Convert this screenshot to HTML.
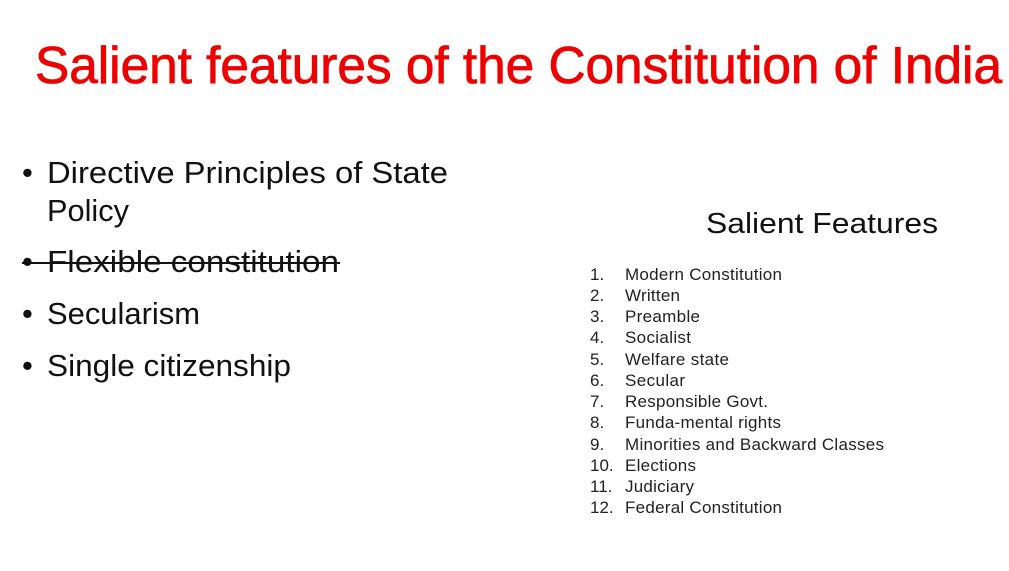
<!DOCTYPE html>
<html><head><meta charset="utf-8"><style>
html,body{margin:0;padding:0;background:#fff;}
svg{display:block}
</style></head><body>
<svg width="1009" height="571" viewBox="0 0 1009 571" xmlns="http://www.w3.org/2000/svg">
<rect width="1009" height="571" fill="#fff"/>
<text x="35" y="83" font-family="Liberation Sans, sans-serif" font-size="52" fill="#ee0000" stroke="#ee0000" stroke-width="0.8" textLength="967" lengthAdjust="spacingAndGlyphs">Salient features of the Constitution of India</text>
<g font-family="Liberation Sans, sans-serif" font-size="31" fill="#111">
<text x="22" y="183">•</text>
<text x="47" y="183" textLength="401" lengthAdjust="spacingAndGlyphs">Directive Principles of State</text>
<text x="47" y="221" textLength="82" lengthAdjust="spacingAndGlyphs">Policy</text>
<text x="22" y="272">•</text>
<text x="47" y="272" textLength="292" lengthAdjust="spacingAndGlyphs">Flexible constitution</text>
<line x1="22" y1="263" x2="340" y2="263" stroke="#111" stroke-width="2"/>
<text x="22" y="324">•</text>
<text x="47" y="324" textLength="153" lengthAdjust="spacingAndGlyphs">Secularism</text>
<text x="22" y="376">•</text>
<text x="47" y="376" textLength="244" lengthAdjust="spacingAndGlyphs">Single citizenship</text>
</g>
<text x="706" y="233" font-family="Liberation Sans, sans-serif" font-size="29" fill="#111" textLength="232" lengthAdjust="spacingAndGlyphs">Salient Features</text>
<g font-family="Liberation Sans, sans-serif" font-size="17" fill="#222" lengthAdjust="spacingAndGlyphs">
<text x="590" y="280">1.</text><text x="625" y="280" textLength="157">Modern Constitution</text>
<text x="590" y="301">2.</text><text x="625" y="301" textLength="55">Written</text>
<text x="590" y="322">3.</text><text x="625" y="322" textLength="75">Preamble</text>
<text x="590" y="343">4.</text><text x="625" y="343" textLength="66">Socialist</text>
<text x="590" y="365">5.</text><text x="625" y="365" textLength="104">Welfare state</text>
<text x="590" y="386">6.</text><text x="625" y="386" textLength="60">Secular</text>
<text x="590" y="407">7.</text><text x="625" y="407" textLength="143">Responsible Govt.</text>
<text x="590" y="428">8.</text><text x="625" y="428" textLength="156">Funda-mental rights</text>
<text x="590" y="450">9.</text><text x="625" y="450" textLength="259">Minorities and Backward Classes</text>
<text x="590" y="471">10.</text><text x="625" y="471" textLength="71">Elections</text>
<text x="590" y="492">11.</text><text x="625" y="492" textLength="69">Judiciary</text>
<text x="590" y="513">12.</text><text x="625" y="513" textLength="157">Federal Constitution</text>
</g>
</svg>
</body></html>
